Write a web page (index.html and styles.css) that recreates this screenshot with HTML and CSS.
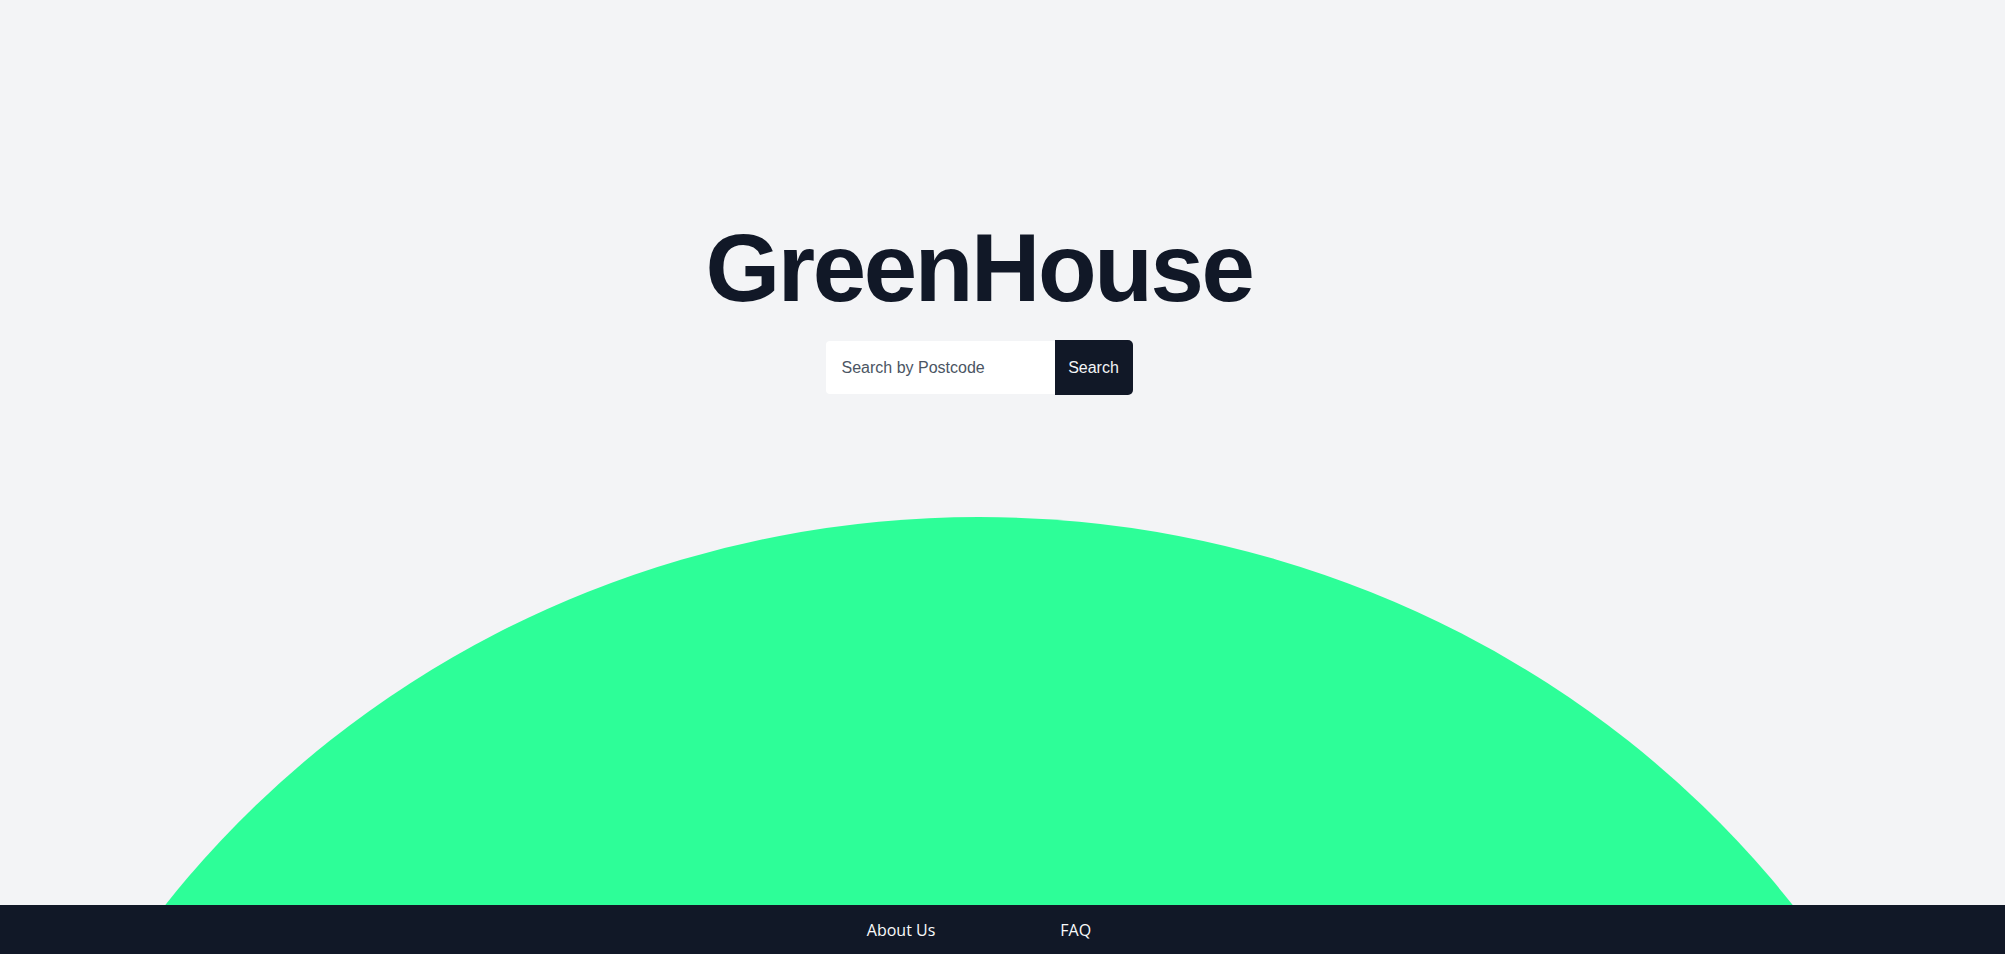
FILE: index.html
```html
<!DOCTYPE html>
<html lang="en">
<head>
<meta charset="utf-8">
<title>GreenHouse</title>
<link rel="stylesheet" href="styles.css">
</head>
<body>
<div class="page">
  <main class="hero">
    <div class="blob" aria-hidden="true"></div>
    <h1 class="title">GreenHouse</h1>
    <form class="search" onsubmit="return false">
      <input class="search-input" type="text" placeholder="Search by Postcode">
      <button class="search-button" type="submit">Search</button>
    </form>
  </main>
  <footer class="footer">
    <nav class="footer-nav">
      <a class="footer-link" href="#">About Us</a>
      <a class="footer-link" href="#">FAQ</a>
    </nav>
  </footer>
</div>
</body>
</html>
```
FILE: styles.css
```css
* {
  box-sizing: border-box;
}

html, body {
  margin: 0;
  padding: 0;
}

body {
  background: #f3f4f6;
  font-family: "Liberation Sans", Arial, sans-serif;
  color: #111827;
}

.page {
  min-height: 100vh;
  display: flex;
  flex-direction: column;
}

.hero {
  position: relative;
  flex: 1;
  overflow: hidden;
  display: flex;
  flex-direction: column;
  align-items: center;
  padding-top: 220px;
  padding-right: 47px;
}

.blob {
  position: absolute;
  left: -44px;
  top: 517px;
  width: 2046px;
  height: 1970px;
  border-radius: 50%;
  background: #2dfe98;
  z-index: 0;
}

.title {
  position: relative;
  z-index: 1;
  margin: 0;
  font-family: "Liberation Sans", Arial, sans-serif;
  font-weight: 700;
  font-size: 96px;
  line-height: 1;
  letter-spacing: -0.025em;
  color: #111827;
}

.search {
  position: relative;
  z-index: 1;
  display: flex;
  align-items: center;
  margin-top: 24px;
  height: 55px;
}

.search-input {
  width: 229px;
  height: 53px;
  border: none;
  outline: none;
  border-radius: 4px 0 0 4px;
  background: #ffffff;
  padding: 0 16px;
  font-family: "Liberation Sans", Arial, sans-serif;
  font-size: 16px;
  color: #4b5563;
}

.search-input::placeholder {
  color: #4b5563;
  opacity: 1;
}

.search-button {
  width: 78px;
  height: 55px;
  border: none;
  border-radius: 0 5px 5px 0;
  background: #111827;
  color: #f3f4f6;
  font-family: "Liberation Sans", Arial, sans-serif;
  font-size: 16px;
  padding: 0;
  cursor: pointer;
}

.footer {
  height: 49px;
  background: #111827;
  display: flex;
  align-items: center;
  justify-content: center;
  padding-right: 47px;
}

.footer-nav {
  display: flex;
  gap: 125px;
}

.footer-link {
  font-family: "Open Sans", "Noto Sans", sans-serif;
  font-size: 16px;
  line-height: 24px;
  color: #f9fafb;
  text-decoration: none;
}
```
